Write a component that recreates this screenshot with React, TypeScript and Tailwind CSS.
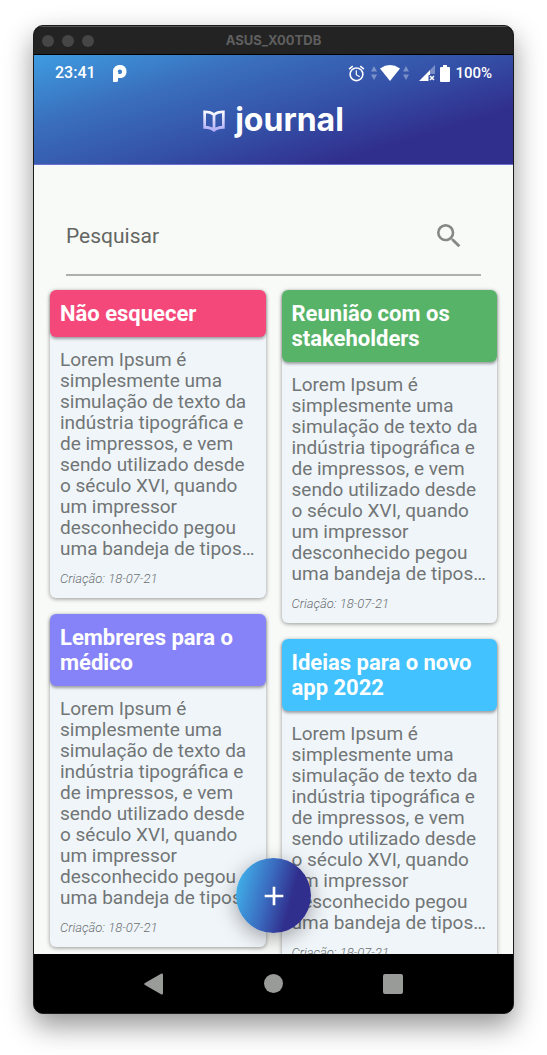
import React from "react";
import { MdAdd, MdAlarm, MdSearch } from "react-icons/md";

type Note = { title: string; color: string; text: string; created: string };

const lorem =
  "Lorem Ipsum é simplesmente uma simulação de texto da indústria tipográfica e de impressos, e vem sendo utilizado desde o século XVI, quando um impressor desconhecido pegou uma bandeja de tipos…";

const columns: Note[][] = [
  [
    { title: "Não esquecer", color: "bg-[#f5487a]", text: lorem, created: "18-07-21" },
    { title: "Lembreres para o médico", color: "bg-[#8683f8]", text: lorem, created: "18-07-21" },
  ],
  [
    { title: "Reunião com os stakeholders", color: "bg-[#57b368]", text: lorem, created: "18-07-21" },
    { title: "Ideias para o novo app 2022", color: "bg-[#42c2fe]", text: lorem, created: "18-07-21" },
  ],
];

function TitleBar() {
  return (
    <div className="grid h-[29px] shrink-0 grid-cols-[1fr_auto_1fr] items-center border-t border-b border-t-[#555] border-b-black bg-[#232323] px-2">
      <div className="flex gap-2">
        <span className="size-3 rounded-full bg-[#464646]" />
        <span className="size-3 rounded-full bg-[#464646]" />
        <span className="size-3 rounded-full bg-[#464646]" />
      </div>
      <span className="pb-[2px] font-[Inter,sans-serif] text-[13px] leading-4 font-bold text-[#5f5f5f]">ASUS_X00TDB</span>
    </div>
  );
}

function Arrows() {
  return (
    <svg viewBox="0 0 6 14" className="h-[14px] w-[6px] fill-white/35" aria-hidden="true">
      <path d="M3 0 6 5.500H0zM3 14 0 8.500h6z" />
    </svg>
  );
}

function StatusBar() {
  return (
    <div className="flex h-9 items-center justify-between px-[21px] text-[16px] font-medium text-white">
      <div className="flex items-center gap-[17px]">
        <span>23:41</span>
        <svg viewBox="0 0 14 17" className="h-[17px] w-[14px]" aria-hidden="true">
          <path
            fill="white"
            fillRule="evenodd"
            d="M0 6.500C0 2.500 3 0 7 0s6.500 2.600 6.500 6.500S11 13 7.500 13H5v2.500Q5 17 3.500 17H0zM5.300 9h1.700A2.200 2.200 0 1 0 4.700 6.800L5.300 7z"
          />
        </svg>
      </div>
      <div className="flex items-center">
        <MdAlarm className="size-[19px]" />
        <div className="ml-[5px] flex items-center gap-[3px]">
          <Arrows />
          <svg viewBox="0 0 20 16" className="h-4 w-5 fill-white" aria-hidden="true">
            <path d="M0 3.500Q10-3.300 20 3.500L10 16z" />
          </svg>
          <Arrows />
        </div>
        <svg viewBox="0 0 16 16" className="ml-[10px] size-4" aria-hidden="true">
          <path fill="white" fillOpacity=".35" d="M16 0v9h-5V5z" />
          <path fill="white" d="M0 16 11 5v5H9.500v6z" />
          <path stroke="white" strokeWidth="1.500" d="m11 11 4 4m0-4-4 4" />
        </svg>
        <svg viewBox="0 0 10 17" className="ml-[5px] h-[17px] w-[10px] fill-white" aria-hidden="true">
          <path d="M3 0h4v2h2q1 0 1 1v13q0 1-1 1H1q-1 0-1-1V3q0-1 1-1h2z" />
        </svg>
        <span className="ml-[5px] text-[15px]">100%</span>
      </div>
    </div>
  );
}

function Header() {
  return (
    <header className="h-[110px] shrink-0 border-b border-[#6a6fd0] bg-[linear-gradient(163deg,#3e9ce0_0%,#3a6fbd_28%,#3451a8_54%,#312f8e_78%,#312f8e_100%)]">
      <StatusBar />
      <div className="flex h-[60px] items-center justify-center gap-[10px]">
        <svg viewBox="0 0 22 22" className="size-[22px]" aria-hidden="true">
          <defs>
            <linearGradient id="book" x1="0" y1="0" x2="0" y2="1">
              <stop offset="0" stopColor="#fff" />
              <stop offset="1" stopColor="#a9a6f5" />
            </linearGradient>
          </defs>
          <path
            fill="url(#book)"
            fillRule="evenodd"
            d="M.3.500C4 .3 8 .9 11 3 14 .9 18 .3 21.700.500V18.800C17 18.600 14 19.500 11 22 8 19.500 5 18.600.300 18.800zM3 3.200V15.900c2.500 0 4.600.5 6.600 1.700V5.400C7.500 3.900 5.300 3.300 3 3.200zM19 3.200C16.700 3.300 14.500 3.900 12.400 5.400V17.600C14.400 16.400 16.500 15.900 19 15.900z"
          />
        </svg>
        <h1 className="pb-[2px] font-[Inter,sans-serif] text-[32px] leading-10 font-bold text-white">journal</h1>
      </div>
    </header>
  );
}

function Search() {
  return (
    <form className="mx-4 flex h-[78px] items-center border-b-2 border-[#adb0ac] pr-4">
      <input
        type="text"
        aria-label="Pesquisar"
        placeholder="Pesquisar"
        className="min-w-0 flex-1 bg-transparent text-[21px] leading-7 text-[#646663] outline-none placeholder:text-[#646663]"
      />
      <button type="button" aria-label="Buscar">
        <MdSearch className="size-8 text-[#868885]" />
      </button>
    </form>
  );
}

function Card({ note }: { note: Note }) {
  return (
    <article className="rounded-md bg-[#f0f5fa] shadow-[0_1px_4px_rgba(0,0,0,0.4)]">
      <h2
        className={`rounded-md px-[10px] py-[11px] text-[22px] leading-[25px] font-bold text-white shadow-[0_2px_3px_rgba(0,0,0,0.35)] ${note.color}`}
      >
        {note.title}
      </h2>
      <div className="px-[10px] pt-3 pb-[10px]">
        <p className="text-[19px] leading-[21px] text-[#717576]">{note.text}</p>
        <p className="mt-[11px] text-[13px] leading-[18px] font-light text-[#6a6f71] italic">Criação: {note.created}</p>
      </div>
    </article>
  );
}

export default function App() {
  return (
    <div className="flex h-screen flex-col bg-white px-[33px] pt-[25px] pb-[41px] font-[Roboto,sans-serif]">
      <div className="flex min-h-0 flex-1 flex-col overflow-hidden rounded-[10px] border border-[#1c1c1c] bg-black shadow-[0_12px_28px_rgba(0,0,0,0.42)]">
        <TitleBar />
        <Header />
        <main className="relative min-h-0 flex-1 overflow-hidden bg-[#f8faf7] px-4 pt-[33px]">
          <Search />
          <div className="mt-[14px] grid grid-cols-2 items-start gap-4">
            {columns.map((notes, i) => (
              <div key={i} className="flex flex-col gap-4">
                {notes.map((note) => (
                  <Card key={note.title} note={note} />
                ))}
              </div>
            ))}
          </div>
          <button
            type="button"
            aria-label="Nova nota"
            className="absolute inset-x-0 bottom-[21px] mx-auto flex size-[75px] items-center justify-center rounded-full bg-[linear-gradient(105deg,#41b4ec_5%,#3a6cbf_42%,#312f8e_70%)] text-white shadow-[0_5px_20px_rgba(0,0,0,0.35)]"
          >
            <MdAdd className="size-8" />
          </button>
        </main>
        <nav aria-label="Sistema" className="grid h-[59px] shrink-0 grid-cols-3 place-items-center bg-black px-[12.5%]">
          <button type="button" aria-label="Voltar">
            <svg viewBox="0 0 20 22" className="h-[22px] w-5 fill-[#999b98]" aria-hidden="true">
              <path d="M1 10 17 .8q2-1 2 1v18.400q0 2-2 1L1 12q-1.600-1 0-2z" />
            </svg>
          </button>
          <button type="button" aria-label="Início" className="size-[19px] rounded-full bg-[#999b98]" />
          <button type="button" aria-label="Recentes" className="size-5 rounded-xs bg-[#999b98]" />
        </nav>
      </div>
    </div>
  );
}
